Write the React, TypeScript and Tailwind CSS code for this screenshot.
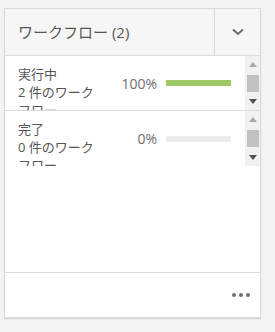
import React from "react";

const font = { fontFamily: '"Open Sans", "Noto Sans CJK JP", sans-serif' };

function FakeScroll() {
  return (
    <div className="w-[15px] h-full bg-[#f1f1f1] flex flex-col items-center justify-between py-[6px] shrink-0">
      <svg width="8" height="5" viewBox="0 0 8 5">
        <polygon points="0,5 8,5 4,0" fill="#a8a8a8" />
      </svg>
      <div className="w-[12px] h-[17px] bg-[#c1c1c1]" />
      <svg width="8" height="5" viewBox="0 0 8 5">
        <polygon points="0,0 8,0 4,5" fill="#505050" />
      </svg>
    </div>
  );
}

function Row({ title, count, pct, border }: { title: string; count: string; pct: number; border: boolean }) {
  return (
    <div className={`flex h-[55px] ${border ? "border-b border-[#dcdcdc]" : ""}`}>
      <div className="flex-1 flex overflow-hidden">
        <div className="w-[93px] pl-[13px] pt-[9px] text-[13px] leading-[18px] text-[#555555] shrink-0">
          <div>{title}</div>
          <div>{count}</div>
        </div>
        <div className="w-[59px] flex items-center justify-end text-[14px] text-[#6e6e6e]">{pct}%</div>
        <div className="ml-[9px] flex items-center">
          <div className="w-[65px] h-[6px] bg-[#ececec]">
            <div className="h-full bg-[#9fc966]" style={{ width: `${pct}%` }} />
          </div>
        </div>
      </div>
      <FakeScroll />
    </div>
  );
}

export default function App() {
  return (
    <div className="w-[275px] h-[332px] bg-[#f3f3f3] pt-[8px] pl-[4px]" style={font}>
      <div className="w-[257px] h-[310px] bg-white border border-[#dadada] shadow-[0_1px_1px_rgba(0,0,0,0.12)] flex flex-col">
        <div className="h-[47px] flex bg-[#f6f6f6] border-b border-[#dcdcdc] shrink-0">
          <div className="flex-1 flex items-center pl-[13px] text-[15px] text-[#555555]">ワークフロー (2)</div>
          <div className="w-[46px] border-l border-[#dcdcdc] flex items-center justify-center">
            <svg width="12" height="8" viewBox="0 0 12 8">
              <polyline points="1,1.5 6,6 11,1.5" fill="none" stroke="#6e6e6e" strokeWidth="2" />
            </svg>
          </div>
        </div>
        <div className="flex-1">
          <Row title="実行中" count="2 件のワークフロー" pct={100} border />
          <Row title="完了" count="0 件のワークフロー" pct={0} border={false} />
        </div>
        <div className="h-[45px] border-t border-[#dcdcdc] flex items-center justify-end pr-[10px] gap-[3px] shrink-0">
          <div className="w-[4px] h-[4px] rounded-full bg-[#707070]" />
          <div className="w-[4px] h-[4px] rounded-full bg-[#707070]" />
          <div className="w-[4px] h-[4px] rounded-full bg-[#707070]" />
        </div>
      </div>
    </div>
  );
}
